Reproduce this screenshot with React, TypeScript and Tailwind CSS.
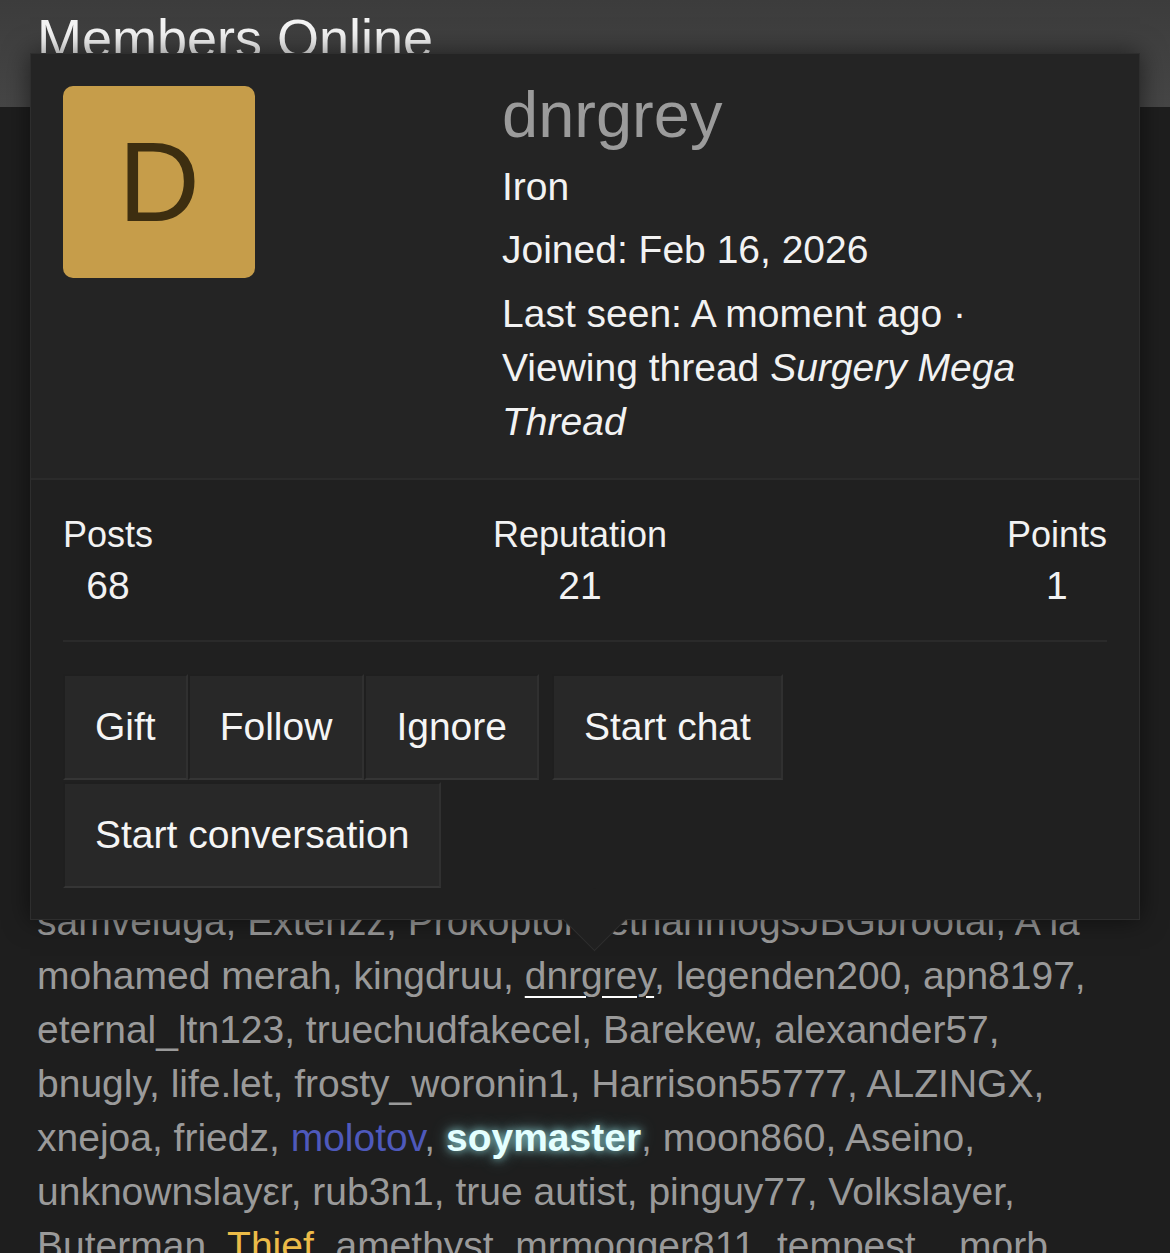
import React from "react";

type Seg = { t: string; c?: string };

const lines: Seg[][] = [
  [{ t: "samveluga, Extenzz, Prokopton, ethanmogsJBGbrootal, A la" }],
  [
    { t: "mohamed merah, kingdruu, " },
    { t: "dnrgrey", c: "u" },
    { t: ", legenden200, apn8197," },
  ],
  [{ t: "eternal_ltn123, truechudfakecel, Barekew, alexander57," }],
  [{ t: "bnugly, life.let, frosty_woronin1, Harrison55777, ALZINGX," }],
  [
    { t: "xnejoa, friedz, " },
    { t: "molotov", c: "blue" },
    { t: ", " },
    { t: "soymaster", c: "glow" },
    { t: ", moon860, Aseino," },
  ],
  [{ t: "unknownslayεr, rub3n1, true autist, pinguy77, Volkslayer," }],
  [
    { t: "Buterman, " },
    { t: "Thief", c: "gold" },
    { t: ", amethyst, mrmogger811, tempest_, morb," },
  ],
];

function Seg({ s }: { s: Seg }) {
  if (s.c === "u")
    return (
      <span className="underline decoration-white decoration-2 underline-offset-[7px]">
        {s.t}
      </span>
    );
  if (s.c === "blue") return <span className="text-[#4e59bb]">{s.t}</span>;
  if (s.c === "gold") return <span className="text-[#ecbb48]">{s.t}</span>;
  if (s.c === "glow")
    return (
      <span className="font-bold text-[#e4ffff] [text-shadow:0_0_8px_rgba(170,255,255,0.75),0_0_18px_rgba(140,230,240,0.45)]">
        {s.t}
      </span>
    );
  return <span>{s.t}</span>;
}

function Btn({ children }: { children: React.ReactNode }) {
  return (
    <div className="h-[106px] flex items-center px-[30px] bg-[#282828] border-2 border-t-[#1f1f1f] border-l-[#1f1f1f] border-r-[#303030] border-b-[#353535] text-[#f5f5f5] text-[39px] leading-none whitespace-nowrap">
      {children}
    </div>
  );
}

function Stat({ label, value }: { label: string; value: string }) {
  return (
    <div className="flex flex-col items-center">
      <div className="text-[36px] leading-[1.2] text-[#f2f2f2]">{label}</div>
      <div className="mt-[7px] text-[39px] leading-[1.2] text-[#f2f2f2]">{value}</div>
    </div>
  );
}

export default function App() {
  return (
    <div className="relative w-[1170px] h-[1253px] overflow-hidden bg-[#1e1e1e] font-['Liberation_Sans',Arial,sans-serif]">
      {/* header band */}
      <div className="h-[107px] bg-gradient-to-b from-[#3c3c3c] to-[#464646] pt-[6px] pl-[37px]">
        <div className="text-[54px] leading-[1.2] text-[#f4f4f4] whitespace-nowrap">Members Online</div>
      </div>

      {/* member list */}
      <div className="pt-[788px] pl-[37px] text-[39px] leading-[54px] text-[#9a9a9a] whitespace-nowrap">
        {lines.map((l, i) => (
          <div key={i}>
            {l.map((s, j) => (
              <Seg key={j} s={s} />
            ))}
          </div>
        ))}
      </div>

      {/* member tooltip */}
      <div className="absolute left-[30px] top-[53px] w-[1110px] border border-[#2e2e2e] bg-[#202020] shadow-[0_0_24px_rgba(0,0,0,0.55)]">
        <div className="flex bg-[#242424] pt-[32px] pb-[29px] px-[32px] border-b-2 border-[#2b2b2b]">
          <div className="w-[192px] h-[192px] shrink-0 rounded-[10px] bg-[#c69d4a] flex items-center justify-center">
            <span className="text-[113px] leading-none text-[#3d2e10]">D</span>
          </div>
          <div className="ml-[247px] -mt-[4px] text-[39px] text-[#f2f2f2]">
            <div className="text-[65px] leading-none text-[#9b9b9b]">dnrgrey</div>
            <div className="mt-[13px] leading-[54px]">Iron</div>
            <div className="mt-[9px] leading-[54px]">Joined: Feb 16, 2026</div>
            <div className="mt-[10px] leading-[54px] w-[560px]">
              Last seen: A moment ago ·<br />
              Viewing thread <i>Surgery Mega</i>
              <br />
              <i>Thread</i>
            </div>
          </div>
        </div>

        <div className="px-[32px] pt-[33px] pb-[31px]">
          <div className="flex justify-between">
            <Stat label="Posts" value="68" />
            <Stat label="Reputation" value="21" />
            <Stat label="Points" value="1" />
          </div>
          <div className="mt-[30px] h-[2px] bg-[#2a2a2a]" />
          <div className="mt-[32px] flex flex-wrap gap-x-[13px] gap-y-[2px]">
            <div className="flex">
              <Btn>Gift</Btn>
              <Btn>Follow</Btn>
              <Btn>Ignore</Btn>
            </div>
            <Btn>Start chat</Btn>
            <Btn>Start conversation</Btn>
          </div>
        </div>

        {/* arrow */}
        <div className="absolute left-[541px] bottom-[-23px] w-[45px] h-[45px] rotate-45 bg-[#202020] border-r border-b border-[#2e2e2e]" />
      </div>
    </div>
  );
}
